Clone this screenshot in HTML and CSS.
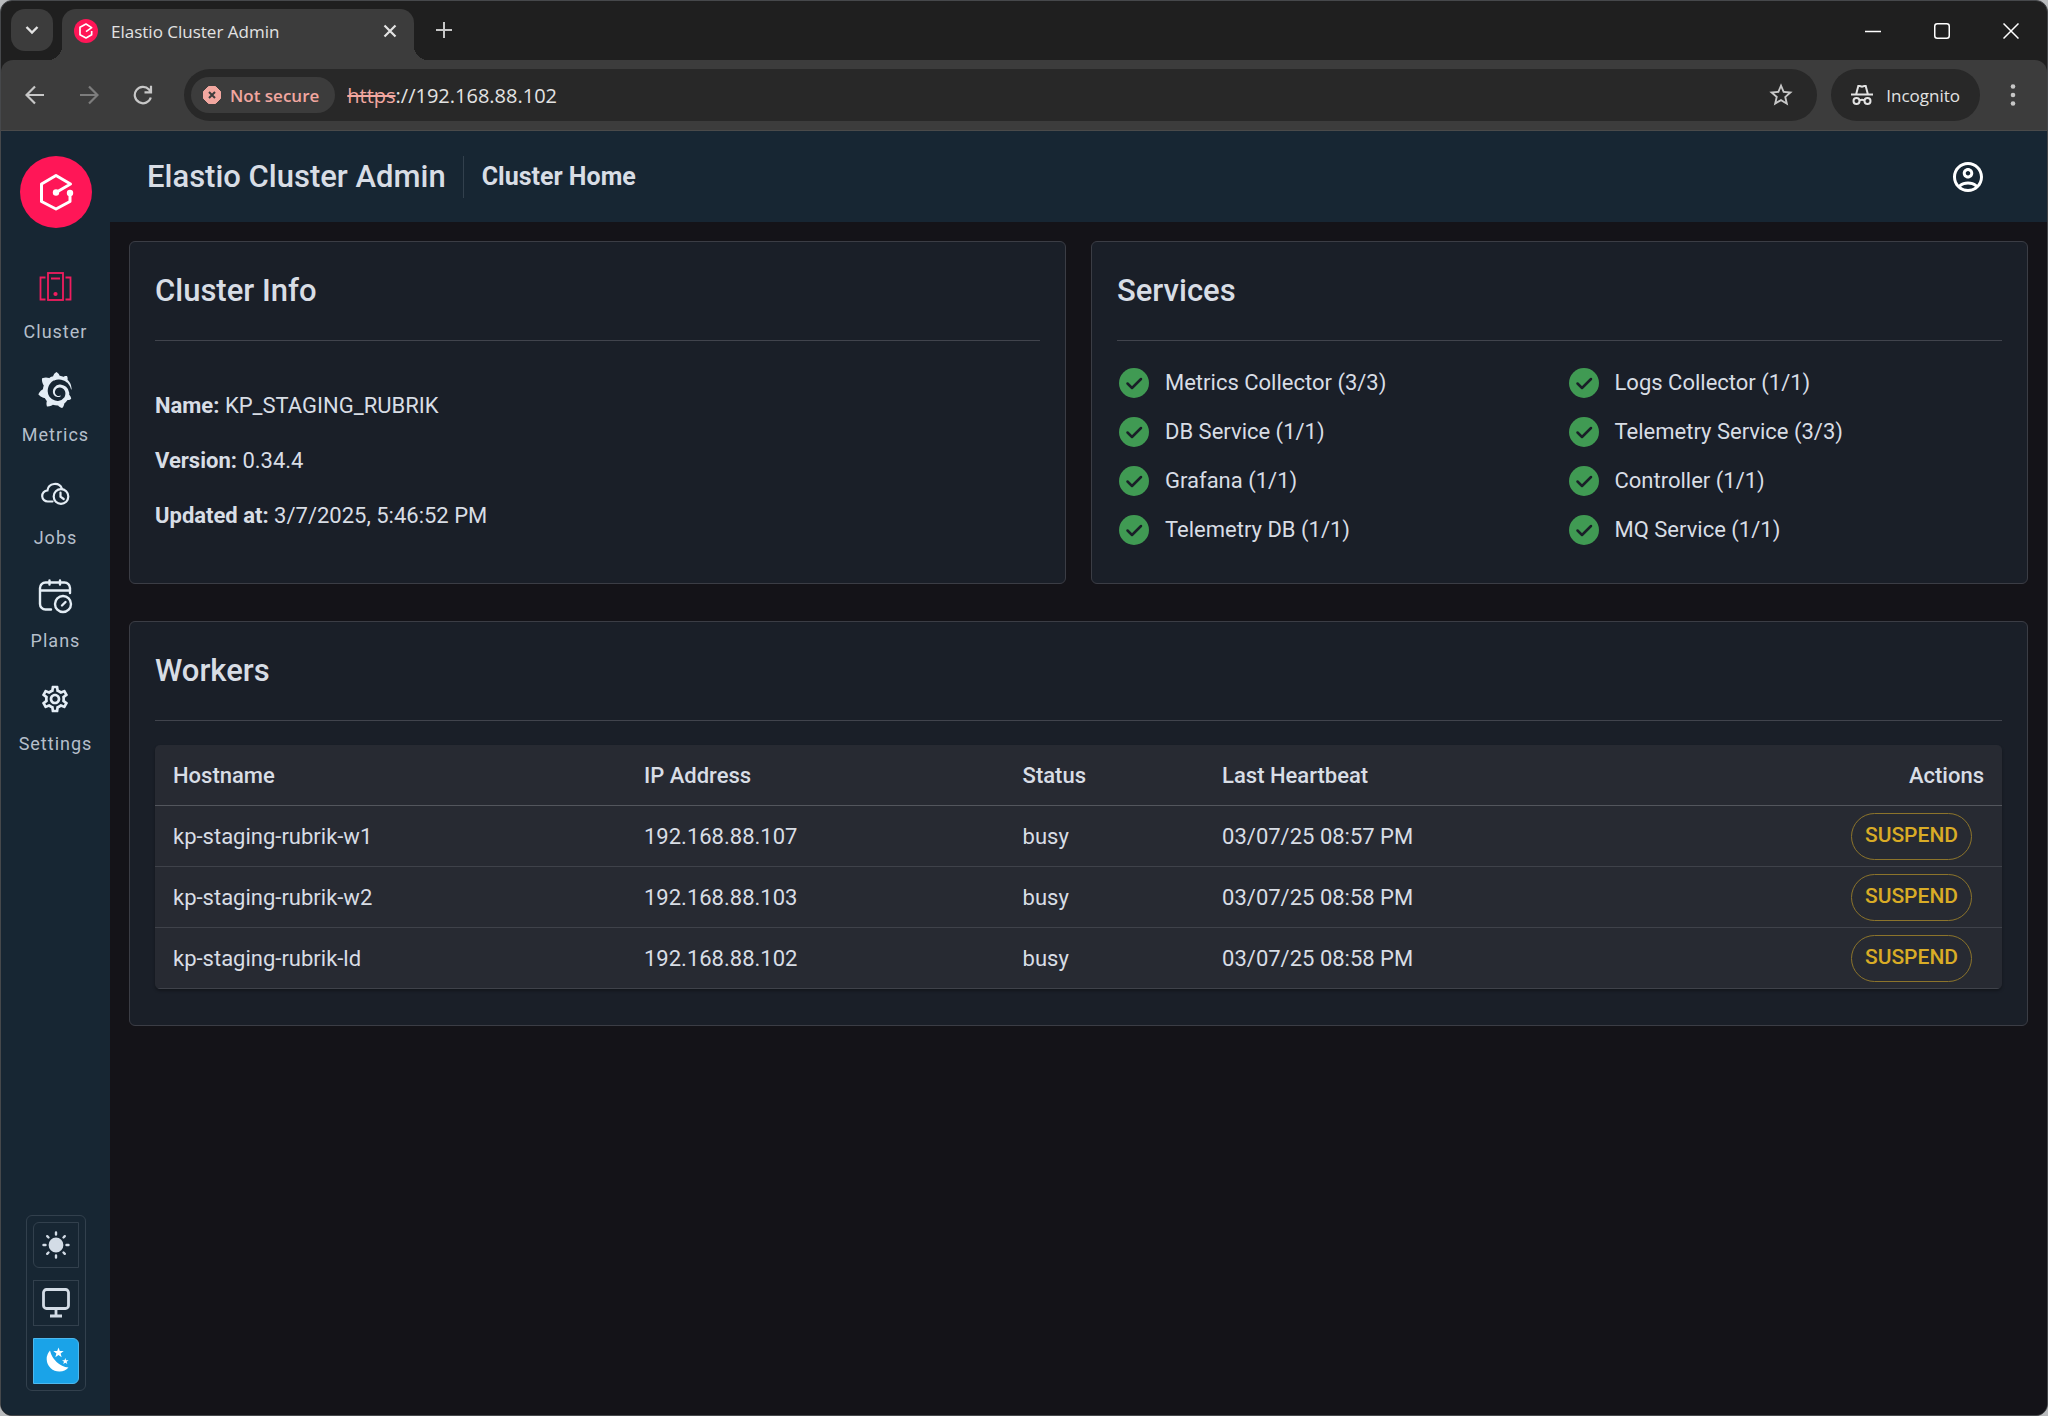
FILE: index.html
```
<!DOCTYPE html>
<html lang="en">
<head>
    <title>Elastio Cluster Admin</title>
    <meta charset="UTF-8">
    <meta name="viewport" content="width=device-width, initial-scale=1.0">
    <link rel="stylesheet" href="styles.css">
</head>
<body>
    <div class="window">
        <!-- Tab strip -->
        <div class="tab-strip">
            <button class="tab-search" aria-label="Search tabs">
                <svg width="18" height="18" viewBox="0 0 18 18" fill="none" stroke="currentColor" stroke-width="2.4"><path d="M3.5 6l5.5 5.5L14.5 6"/></svg>
            </button>
            <div class="tab">
                <svg class="favicon" width="24" height="24" viewBox="0 0 72 72">
                    <circle cx="36" cy="36" r="36" fill="#ff1657"/>
                    <path d="M36 38L53 26 36 15 18 25v22l18 10 17-10V36" fill="none" stroke="#fff" stroke-width="5" stroke-linejoin="round"/>
                </svg>
                <span class="tab-title">Elastio Cluster Admin</span>
                <button class="icon-btn tab-close" aria-label="Close tab">
                    <svg width="18" height="18" viewBox="0 0 18 18" stroke="currentColor" stroke-width="2.2"><path d="M3.5 3.5l11 11M14.5 3.5l-11 11"/></svg>
                </button>
            </div>
            <button class="icon-btn new-tab" aria-label="New tab">
                <svg width="18" height="18" viewBox="0 0 18 18" stroke="currentColor" stroke-width="2"><path d="M9 1v16M1 9h16"/></svg>
            </button>
            <div class="window-controls">
                <button class="icon-btn" aria-label="Minimize">
                    <svg width="16" height="16" viewBox="0 0 16 16" stroke="currentColor" stroke-width="1.5"><path d="M0 8.5h16"/></svg>
                </button>
                <button class="icon-btn" aria-label="Maximize">
                    <svg width="16" height="16" viewBox="0 0 16 16" fill="none" stroke="currentColor" stroke-width="1.5"><rect x=".75" y=".75" width="14.5" height="14.5" rx="2.5"/></svg>
                </button>
                <button class="icon-btn" aria-label="Close">
                    <svg width="16" height="16" viewBox="0 0 16 16" stroke="currentColor" stroke-width="1.5"><path d="M.5.5l15 15M15.5.5l-15 15"/></svg>
                </button>
            </div>
        </div>

        <!-- Toolbar -->
        <div class="toolbar">
            <div class="nav-buttons">
                <button class="icon-btn" aria-label="Back">
                    <svg width="20" height="20" viewBox="0 0 20 20" fill="none" stroke="currentColor" stroke-width="2.2"><path d="M19 10H2M10 1.5L1.500 10l8.500 8.500"/></svg>
                </button>
                <button class="icon-btn" aria-label="Forward" disabled>
                    <svg width="20" height="20" viewBox="0 0 20 20" fill="none" stroke="currentColor" stroke-width="2.2"><path d="M1 10h17M10 1.5l8.500 8.500-8.500 8.500"/></svg>
                </button>
                <button class="icon-btn" aria-label="Reload">
                    <svg width="20" height="20" viewBox="0 0 20 20" fill="none" stroke="currentColor" stroke-width="2.2"><path d="M17.8 12.500A8.200 8.200 0 1 1 16 4.500L18 7M18 .8v6.500h-6.500"/></svg>
                </button>
            </div>
            <div class="address-bar">
                <button class="security-chip">
                    <svg width="18" height="18" viewBox="0 0 18 18"><path d="M5.5.5h7l5 5v7l-5 5h-7l-5-5v-7z" fill="#f2a7a0" stroke="#f2a7a0" stroke-linejoin="round"/><path d="M6 6l6 6M12 6l-6 6" stroke="#3c3c3c" stroke-width="2"/></svg>
                    Not secure
                </button>
                <label class="scheme" for="url"><s>https</s></label>
                <input class="url" id="url" type="text" value="://192.168.88.102">
                <button class="icon-btn" aria-label="Bookmark this tab">
                    <svg width="28" height="28" viewBox="0 0 24 24" fill="currentColor"><path d="M22 9.240l-7.190-.62L12 2 9.190 8.630 2 9.240l5.460 4.730L5.820 21 12 17.270 18.180 21l-1.630-7.030L22 9.240zM12 15.400l-3.760 2.270 1-4.280-3.320-2.880 4.380-.38L12 6.100l1.710 4.040 4.380.38-3.320 2.880 1 4.280L12 15.400z"/></svg>
                </button>
            </div>
            <button class="incognito">
                <svg width="22" height="22" viewBox="0 0 22 22" fill="none" stroke="currentColor" stroke-width="2"><path d="M0 10.500h22M5.200 10L7.300 2h1.500l2.200.8 2.200-.8h1.500L16.800 10"/><circle cx="5.500" cy="17" r="3"/><circle cx="16.500" cy="17" r="3"/><path d="M8.500 16.500q2.500-1.600 5 0"/></svg>
                Incognito
            </button>
            <button class="icon-btn menu-btn" aria-label="Menu">
                <svg width="6" height="24" viewBox="0 0 6 24" fill="currentColor"><circle cx="3" cy="3.500" r="2.300"/><circle cx="3" cy="12" r="2.300"/><circle cx="3" cy="20.500" r="2.300"/></svg>
            </button>
        </div>

        <!-- App -->
        <div class="app">
            <aside class="sidebar">
                <a class="logo" href="#" aria-label="Elastio">
                    <svg width="72" height="72" viewBox="0 0 72 72">
                        <circle cx="36" cy="36" r="36" fill="#ff1657"/>
                        <path d="M36 36.500L50.500 28 36 19.500 21.500 28v17.500L36 53l14-7.500V37" fill="none" stroke="#fff" stroke-width="3" stroke-linejoin="round"/>
                        <circle cx="36" cy="36.500" r="3.200" fill="#fff"/>
                        <circle cx="50" cy="37" r="3.200" fill="#fff"/>
                    </svg>
                </a>
                <nav class="side-nav">
                    <a class="side-link active" href="#cluster">
                        <svg width="36" height="36" viewBox="0 0 36 36" fill="none" stroke="currentColor" stroke-width="1.8"><rect x="11" y="4" width="15" height="27"/><path d="M14 9.500h9M8.500 8.500h-5v22h5M28.500 8.500h5v22h-5"/><circle cx="18.500" cy="25" r="1.200" fill="currentColor"/></svg>
                        <span>Cluster</span>
                    </a>
                    <a class="side-link" href="#metrics">
                        <svg width="36" height="36" viewBox="0 0 24 24" fill="currentColor"><path d="M23.02 10.59a8.578 8.578 0 0 0-.862-3.034 8.911 8.911 0 0 0-1.789-2.445c.337-1.342-.413-2.505-.413-2.505-1.292-.08-2.113.4-2.416.62-.052-.02-.102-.044-.154-.064-.22-.089-.446-.172-.677-.247-.231-.073-.47-.14-.711-.197a9.867 9.867 0 0 0-.875-.161C14.557.753 12.94 0 12.94 0c-1.804 1.145-2.147 2.744-2.147 2.744l-.018.093c-.098.029-.2.057-.298.088-.138.042-.275.094-.413.143-.138.055-.275.107-.41.166a8.869 8.869 0 0 0-1.557.87l-.063-.029c-2.497-.955-4.716.195-4.716.195-.203 2.658.996 4.33 1.235 4.636a11.608 11.608 0 0 0-.607 2.635C1.636 12.677.953 15.014.953 15.014c1.926 2.214 4.171 2.351 4.171 2.351.003-.002.006-.002.006-.005.285.509.615.994.986 1.446.156.19.32.371.488.548-.704 2.009.099 3.68.099 3.68 2.144.08 3.553-.937 3.849-1.173a9.784 9.784 0 0 0 3.164.501h.08l.055-.003.107-.002.103-.005.003.002c1.01 1.44 2.788 1.646 2.788 1.646 1.264-1.332 1.337-2.653 1.337-2.94v-.058c0-.02-.003-.039-.003-.06.265-.187.52-.387.758-.6a7.875 7.875 0 0 0 1.415-1.7c1.43.083 2.437-.885 2.437-.885-.236-1.49-1.085-2.216-1.264-2.354l-.018-.013-.016-.013a.217.217 0 0 1-.031-.02c.008-.092.016-.18.02-.27.011-.162.016-.323.016-.48v-.253l-.005-.098-.008-.135a1.891 1.891 0 0 0-.01-.13c-.003-.042-.008-.083-.013-.125l-.016-.124-.018-.122a6.215 6.215 0 0 0-2.032-3.73 6.015 6.015 0 0 0-3.222-1.46 6.292 6.292 0 0 0-.85-.048l-.107.002h-.063l-.044.003-.104.008a4.777 4.777 0 0 0-3.335 1.695c-.332.4-.592.84-.768 1.297a4.594 4.594 0 0 0-.312 1.817l.003.091c.005.055.007.11.013.164a3.615 3.615 0 0 0 .698 1.82 3.53 3.53 0 0 0 1.827 1.282c.33.098.66.14.971.137.039 0 .078 0 .114-.002l.063-.003c.02 0 .041-.003.062-.003.034-.002.065-.007.099-.01.007 0 .018-.003.028-.003l.031-.005.06-.008a1.18 1.18 0 0 0 .112-.02c.036-.008.072-.013.109-.024a2.634 2.634 0 0 0 .914-.415c.028-.02.056-.041.085-.065a.248.248 0 0 0 .039-.35.244.244 0 0 0-.309-.06l-.078.042c-.09.044-.184.083-.283.116a2.476 2.476 0 0 1-.475.096c-.028.003-.054.006-.083.006l-.083.002c-.026 0-.054 0-.08-.002l-.102-.006h-.012l-.024.006c-.016-.003-.031-.003-.044-.006-.031-.002-.06-.007-.091-.01a2.59 2.59 0 0 1-.724-.213 2.557 2.557 0 0 1-.667-.438 2.52 2.52 0 0 1-.805-1.475 2.306 2.306 0 0 1-.029-.444l.006-.122v-.023l.002-.031c.003-.021.003-.04.005-.06a3.163 3.163 0 0 1 1.352-2.29 3.12 3.12 0 0 1 .937-.43 2.946 2.946 0 0 1 .776-.101h.06l.07.002.045.003h.026l.07.005a4.041 4.041 0 0 1 1.635.49 3.94 3.94 0 0 1 1.602 1.662 3.77 3.77 0 0 1 .397 1.414l.005.076.003.075c.002.026.002.05.002.075 0 .024.003.052 0 .07v.065l-.002.073-.008.174a6.195 6.195 0 0 1-.08.639 5.1 5.1 0 0 1-.267.927 5.31 5.31 0 0 1-.624 1.13 5.052 5.052 0 0 1-3.237 2.014 4.82 4.82 0 0 1-.649.066l-.039.003h-.287a6.607 6.607 0 0 1-1.716-.265 6.776 6.776 0 0 1-3.4-2.274 6.75 6.75 0 0 1-.746-1.15 6.616 6.616 0 0 1-.714-2.596l-.005-.083-.002-.02v-.056l-.003-.073v-.096l-.003-.104v-.07l.003-.163c.008-.22.026-.45.054-.678a8.707 8.707 0 0 1 .28-1.355c.128-.444.286-.872.473-1.277a7.04 7.04 0 0 1 1.456-2.1 5.925 5.925 0 0 1 .953-.763c.169-.111.343-.213.524-.306.089-.05.182-.091.273-.135.047-.02.093-.042.138-.062a7.177 7.177 0 0 1 .714-.267l.145-.045c.049-.015.098-.026.148-.041.098-.029.197-.052.296-.076.049-.013.1-.02.15-.033l.15-.032.151-.028.076-.013.075-.01.153-.024c.057-.01.114-.013.171-.023l.169-.021c.036-.003.073-.008.106-.01l.073-.008.036-.003.042-.002c.057-.003.114-.008.171-.01l.086-.006h.023l.037-.003.145-.007a7.999 7.999 0 0 1 1.708.125 7.917 7.917 0 0 1 2.048.68 8.253 8.253 0 0 1 1.672 1.09l.09.077.089.078c.06.052.114.107.171.159.057.052.112.106.166.16.052.055.107.107.159.164a8.671 8.671 0 0 1 1.41 1.978c.012.026.028.052.04.078l.04.078.075.156c.023.051.05.1.07.153l.065.15a8.848 8.848 0 0 1 .45 1.34.19.19 0 0 0 .201.142.186.186 0 0 0 .172-.184c.01-.246.002-.532-.024-.856z"/></svg>
                        <span>Metrics</span>
                    </a>
                    <a class="side-link" href="#jobs">
                        <svg width="36" height="36" viewBox="0 0 36 36" fill="none" stroke="currentColor" stroke-width="2.2" stroke-linecap="round"><path d="M15.500 26.500H11a5.500 5.500 0 0 1-.6-11A7.600 7.600 0 0 1 25 13.800"/><circle cx="24" cy="21.500" r="7.300"/><path d="M23.500 17.500v4.200l3.200 2.300"/></svg>
                        <span>Jobs</span>
                    </a>
                    <a class="side-link" href="#plans">
                        <svg width="36" height="36" viewBox="0 0 36 36" fill="none" stroke="currentColor" stroke-width="2.4" stroke-linecap="round"><path d="M14 31.500H8.500a5.500 5.500 0 0 1-5.500-5.500V10a5.500 5.500 0 0 1 5.500-5.500h19A5.500 5.500 0 0 1 33 10v5M3 12.500h30M12.500 2.500v4M23 2.500v4"/><circle cx="26" cy="26" r="8"/><path d="M25 27.500l3.500-3.500"/></svg>
                        <span>Plans</span>
                    </a>
                    <a class="side-link" href="#settings">
                        <svg width="36" height="36" viewBox="-1.5 -1.5 27 27" fill="currentColor"><path d="M19.430 12.980c.04-.32.07-.64.07-.98 0-.34-.03-.66-.07-.98l2.110-1.650c.19-.15.24-.42.12-.64l-2-3.460c-.09-.16-.26-.25-.44-.25-.06 0-.12.01-.17.03l-2.490 1c-.52-.4-1.080-.73-1.690-.98l-.38-2.650C14.460 2.180 14.250 2 14 2h-4c-.25 0-.46.18-.49.42l-.38 2.650c-.61.25-1.170.59-1.690.98l-2.490-1c-.06-.02-.12-.03-.18-.03-.17 0-.34.09-.43.25l-2 3.460c-.13.22-.07.49.12.64l2.110 1.650c-.04.32-.07.65-.07.98 0 .33.03.66.07.98l-2.110 1.650c-.19.15-.24.42-.12.64l2 3.460c.09.16.26.25.44.25.06 0 .12-.01.17-.03l2.490-1c.52.4 1.080.73 1.690.98l.38 2.650c.03.24.24.42.49.42h4c.25 0 .46-.18.49-.42l.38-2.650c.61-.25 1.170-.59 1.690-.98l2.490 1c.06.02.12.03.18.03.17 0 .34-.09.43-.25l2-3.460c.12-.22.07-.49-.12-.64l-2.110-1.650zm-1.980-1.710c.04.31.05.52.05.73 0 .21-.02.43-.05.73l-.14 1.130.89.7 1.080.84-.7 1.210-1.270-.51-1.040-.42-.9.68c-.43.32-.84.56-1.250.73l-1.060.43-.16 1.130-.2 1.350h-1.400l-.19-1.350-.16-1.130-1.060-.43c-.43-.18-.83-.41-1.230-.71l-.91-.7-1.060.43-1.270.51-.7-1.210 1.080-.84.89-.7-.14-1.130c-.03-.31-.05-.54-.05-.74s.02-.43.05-.73l.14-1.130-.89-.7-1.080-.84.7-1.210 1.270.51 1.040.42.9-.68c.43-.32.84-.56 1.250-.73l1.060-.43.16-1.130.2-1.350h1.390l.19 1.350.16 1.130 1.060.43c.43.18.83.41 1.230.71l.91.7 1.060-.43 1.270-.51.7 1.210-1.070.85-.89.7.14 1.130zM12 8c-2.210 0-4 1.790-4 4s1.790 4 4 4 4-1.790 4-4-1.790-4-4-4zm0 6c-1.100 0-2-.9-2-2s.9-2 2-2 2 .9 2 2-.9 2-2 2z"/></svg>
                        <span>Settings</span>
                    </a>
                </nav>
                <div class="theme-switch">
                    <button class="theme-btn" aria-label="Light theme">
                        <svg width="28" height="28" viewBox="0 0 28 28" fill="currentColor" stroke="currentColor" stroke-width="2.4" stroke-linecap="round"><circle cx="14" cy="14" r="6.200"/><path d="M14 1.500v2M14 24.500v2M1.500 14h2M24.500 14h2M5.200 5.200l1.300 1.300M21.500 21.500l1.300 1.300M5.200 22.800l1.300-1.300M21.500 6.500l1.300-1.300"/></svg>
                    </button>
                    <button class="theme-btn" aria-label="System theme">
                        <svg width="28" height="30" viewBox="0 0 28 30" fill="none" stroke="currentColor" stroke-width="2.8"><rect x="1.500" y="1.500" width="25" height="19" rx="3"/><path d="M14 20.500v7M8 28h12"/></svg>
                    </button>
                    <button class="theme-btn selected" aria-label="Dark theme">
                        <svg width="28" height="28" viewBox="0 0 28 28" fill="currentColor"><path d="M8 3.500A12.500 12.500 0 1 0 26.500 20.500 22 22 0 0 1 8 3.500z"/><path d="M16.500.5l1.300 3.500h3.900l-3.100 2.400 1.100 3.800-3.200-2.200-3.200 2.200 1.100-3.800L11.300 4h3.900zM23.300 11l.8 2.200h2.500l-2 1.500.7 2.400-2-1.400-2.100 1.400.8-2.400-2-1.500h2.500z"/></svg>
                    </button>
                </div>
            </aside>

            <div class="page">
                <header class="page-header">
                    <div class="product">Elastio Cluster Admin</div>
                    <h1>Cluster Home</h1>
                    <button class="icon-btn account" aria-label="Account">
                        <svg width="36" height="36" viewBox="0 0 24 24" fill="currentColor"><path d="M12 2C6.480 2 2 6.480 2 12s4.480 10 10 10 10-4.480 10-10S17.520 2 12 2M7.350 18.500C8.660 17.560 10.260 17 12 17s3.340.56 4.650 1.500c-1.310.94-2.910 1.500-4.650 1.500s-3.340-.56-4.650-1.500m10.790-1.380C16.450 15.800 14.320 15 12 15s-4.450.8-6.140 2.120C4.700 15.730 4 13.950 4 12c0-4.420 3.580-8 8-8s8 3.580 8 8c0 1.950-.7 3.730-1.860 5.120M12 6c-1.930 0-3.500 1.570-3.500 3.500S10.070 13 12 13s3.500-1.570 3.500-3.500S13.930 6 12 6m0 5c-.83 0-1.500-.67-1.500-1.500S11.170 8 12 8s1.500.67 1.500 1.500S12.830 11 12 11"/></svg>
                    </button>
                </header>

                <main class="content">
                    <section class="card">
                        <h2>Cluster Info</h2>
                        <div class="info">
                            <p><strong>Name:</strong> KP_STAGING_RUBRIK</p>
                            <p><strong>Version:</strong> 0.34.4</p>
                            <p><strong>Updated at:</strong> 3/7/2025, 5:46:52 PM</p>
                        </div>
                    </section>

                    <section class="card">
                        <h2>Services</h2>
                        <ul class="services">
                            <li><svg class="check" viewBox="0 0 30 30"><circle cx="15" cy="15" r="15"/><path d="M8.500 15.500l4.500 4.500 9-9"/></svg>Metrics Collector (3/3)</li>
                            <li><svg class="check" viewBox="0 0 30 30"><circle cx="15" cy="15" r="15"/><path d="M8.500 15.500l4.500 4.500 9-9"/></svg>Logs Collector (1/1)</li>
                            <li><svg class="check" viewBox="0 0 30 30"><circle cx="15" cy="15" r="15"/><path d="M8.500 15.500l4.500 4.500 9-9"/></svg>DB Service (1/1)</li>
                            <li><svg class="check" viewBox="0 0 30 30"><circle cx="15" cy="15" r="15"/><path d="M8.500 15.500l4.500 4.500 9-9"/></svg>Telemetry Service (3/3)</li>
                            <li><svg class="check" viewBox="0 0 30 30"><circle cx="15" cy="15" r="15"/><path d="M8.500 15.500l4.500 4.500 9-9"/></svg>Grafana (1/1)</li>
                            <li><svg class="check" viewBox="0 0 30 30"><circle cx="15" cy="15" r="15"/><path d="M8.500 15.500l4.500 4.500 9-9"/></svg>Controller (1/1)</li>
                            <li><svg class="check" viewBox="0 0 30 30"><circle cx="15" cy="15" r="15"/><path d="M8.500 15.500l4.500 4.500 9-9"/></svg>Telemetry DB (1/1)</li>
                            <li><svg class="check" viewBox="0 0 30 30"><circle cx="15" cy="15" r="15"/><path d="M8.500 15.500l4.500 4.500 9-9"/></svg>MQ Service (1/1)</li>
                        </ul>
                    </section>

                    <section class="card card-wide">
                        <h2>Workers</h2>
                        <table class="workers">
                            <thead>
                                <tr>
                                    <th class="col-host">Hostname</th>
                                    <th class="col-ip">IP Address</th>
                                    <th class="col-status">Status</th>
                                    <th>Last Heartbeat</th>
                                    <th class="col-actions">Actions</th>
                                </tr>
                            </thead>
                            <tbody>
                                <tr>
                                    <td>kp-staging-rubrik-w1</td>
                                    <td>192.168.88.107</td>
                                    <td>busy</td>
                                    <td>03/07/25 08:57 PM</td>
                                    <td class="actions"><button class="suspend">SUSPEND</button></td>
                                </tr>
                                <tr>
                                    <td>kp-staging-rubrik-w2</td>
                                    <td>192.168.88.103</td>
                                    <td>busy</td>
                                    <td>03/07/25 08:58 PM</td>
                                    <td class="actions"><button class="suspend">SUSPEND</button></td>
                                </tr>
                                <tr>
                                    <td>kp-staging-rubrik-ld</td>
                                    <td>192.168.88.102</td>
                                    <td>busy</td>
                                    <td>03/07/25 08:58 PM</td>
                                    <td class="actions"><button class="suspend">SUSPEND</button></td>
                                </tr>
                            </tbody>
                        </table>
                    </section>
                </main>
            </div>
        </div>
    </div>
</body>
</html>
```
FILE: styles.css
```
* {
    box-sizing: border-box;
}
body {
    margin: 0;
    background: #b9bbbd;
    color: #d8dde5;
    font-family: Roboto, sans-serif;
    font-size: 22px;
}
button {
    font: inherit;
    color: inherit;
    background: none;
    border: 0;
    padding: 0;
    cursor: pointer;
}
svg {
    display: block;
    flex: none;
}
.window {
    display: flex;
    flex-direction: column;
    min-height: 100vh;
    border: 1px solid #46484b;
    border-radius: 12px;
    background: #1f1f1f;
    overflow: hidden;
}
.icon-btn {
    display: flex;
    align-items: center;
    justify-content: center;
}

/* Tab strip */
.tab-strip {
    display: flex;
    height: 59px;
    padding: 8px 10px 0;
    color: #e3e3e3;
    font-family: "Open Sans", sans-serif;
    font-size: 17px;
}
.tab-search {
    display: flex;
    align-items: center;
    justify-content: center;
    width: 42px;
    height: 42px;
    border-radius: 14px;
    background: #3c3c3c;
}
.tab {
    position: relative;
    display: flex;
    align-items: center;
    width: 352px;
    margin-left: 9px;
    padding: 0 15px 7px 12px;
    border-radius: 14px 14px 0 0;
    background: #3c3c3c;
}
/* Curved feet on both sides of the active tab */
.tab::before,
.tab::after {
    content: "";
    position: absolute;
    bottom: 0;
    width: 14px;
    height: 14px;
}
.tab::before {
    left: -14px;
    background: radial-gradient(circle at 0 0, transparent 14px, #3c3c3c 14px);
}
.tab::after {
    right: -14px;
    background: radial-gradient(circle at 100% 0, transparent 14px, #3c3c3c 14px);
}
.tab-title {
    flex: 1;
    margin-left: 13px;
}
.new-tab {
    width: 42px;
    height: 42px;
    margin-left: 9px;
    color: #c7c7c7;
}
.window-controls {
    display: flex;
    align-items: center;
    gap: 53px;
    height: 44px;
    margin-left: auto;
    padding-right: 18px;
    color: #fff;
}

/* Toolbar */
.toolbar {
    display: flex;
    align-items: center;
    height: 71px;
    padding: 0 31px 0 24px;
    border-bottom: 1px solid #4a4a4a;
    border-radius: 12px 12px 0 0;
    background: #3c3c3c;
    color: #c7c7c7;
    font-family: "Open Sans", sans-serif;
    font-size: 17px;
}
.nav-buttons {
    display: flex;
    gap: 34px;
}
.nav-buttons button:disabled {
    color: #7d7d7d;
}
.address-bar {
    flex: 1;
    display: flex;
    align-items: center;
    height: 52px;
    margin-left: 31px;
    padding: 0 22px 0 7px;
    border-radius: 26px;
    background: #282828;
    font-size: 20px;
}
.security-chip {
    display: flex;
    align-items: center;
    gap: 9px;
    height: 36px;
    padding: 0 16px 0 12px;
    border-radius: 18px;
    background: #3c3c3c;
    color: #f2a7a0;
    font-size: 17px;
    font-weight: 600;
}
.scheme {
    margin-left: 12px;
    color: #f2a7a0;
}
.url {
    flex: 1;
    min-width: 0;
    border: 0;
    padding: 0;
    background: none;
    color: #e3e3e3;
    font: inherit;
    outline: none;
}
.incognito {
    display: flex;
    align-items: center;
    gap: 13px;
    height: 52px;
    margin-left: 14px;
    padding: 0 20px;
    border-radius: 26px;
    background: #282828;
    color: #e3e3e3;
}
.menu-btn {
    margin-left: 30px;
}

/* Layout */
.app {
    flex: 1;
    display: flex;
    background: #141318;
}
.sidebar {
    display: flex;
    flex-direction: column;
    align-items: center;
    width: 109px;
    padding: 25px 0 24px;
    background: #172633;
}
.page {
    flex: 1;
    min-width: 0;
}

/* Sidebar */
.side-nav {
    display: flex;
    flex-direction: column;
    gap: 28px;
    margin-top: 41px;
}
.side-link {
    display: flex;
    flex-direction: column;
    align-items: center;
    gap: 15px;
    color: #e4edf5;
    font-size: 18px;
    line-height: 24px;
    letter-spacing: 1px;
    text-decoration: none;
}
.side-link span {
    color: #b5bfcb;
}
.side-link.active {
    color: #f01d5f;
}
.theme-switch {
    display: flex;
    flex-direction: column;
    gap: 12px;
    margin-top: auto;
    padding: 6px;
    border: 1px solid #32404d;
    border-radius: 6px;
}
.theme-btn {
    display: flex;
    align-items: center;
    justify-content: center;
    width: 46px;
    height: 46px;
    border: 1px solid #32404d;
    color: #d3dce6;
}
.theme-btn:first-child {
    border-radius: 6px 0 0 6px;
}
.theme-btn:last-child {
    border-radius: 0 6px 6px 0;
}
.theme-btn.selected {
    border-color: #4db8ee;
    background: #1aa3e8;
    color: #fff;
}

/* Header */
.page-header {
    display: flex;
    align-items: center;
    height: 91px;
    padding: 0 61px 0 37px;
    background: #172633;
}
.product {
    padding-right: 17px;
    border-right: 1px solid #32404d;
    font-size: 31px;
    font-weight: 500;
    line-height: 42px;
}
h1 {
    margin: 0 0 0 18px;
    font-size: 25px;
    font-weight: 700;
}
.account {
    margin-left: auto;
    color: #fff;
}

/* Cards */
.content {
    display: grid;
    grid-template-columns: 1fr 1fr;
    gap: 37px 25px;
    padding: 19px;
}
.card {
    padding: 0 25px;
    border: 1px solid #3b3d45;
    border-radius: 6px;
    background: #1a1f28;
}
.card-wide {
    grid-column: 1 / -1;
    padding-bottom: 36px;
}
h2 {
    margin: 0;
    padding: 29px 0;
    border-bottom: 1px solid #41444d;
    font-size: 31px;
    font-weight: 500;
    line-height: 40px;
}
.info {
    padding-top: 52px;
    line-height: 25px;
}
.info p {
    margin: 0 0 30px;
}
.services {
    display: grid;
    grid-template-columns: 1fr 1fr;
    column-gap: 16px;
    margin: 0;
    padding: 17px 0 29px 2px;
    list-style: none;
}
.services li {
    display: flex;
    align-items: center;
    gap: 16px;
    height: 49px;
}
.check {
    width: 30px;
    height: 30px;
}
.check circle {
    fill: #409a53;
}
.check path {
    fill: none;
    stroke: #1a1f28;
    stroke-width: 2.5;
    stroke-linecap: round;
    stroke-linejoin: round;
}

/* Workers table */
.workers {
    width: 100%;
    margin-top: 24px;
    border-spacing: 0;
    border-radius: 5px;
    background: #272a32;
    box-shadow: 0 2px 3px rgba(0, 0, 0, 0.3);
    table-layout: fixed;
    overflow: hidden;
}
.workers th,
.workers td {
    height: 61px;
    padding: 0 18px;
    border-bottom: 1px solid #3f424a;
    text-align: left;
}
.workers th {
    border-bottom-color: #53565d;
    font-weight: 500;
}
.col-host {
    width: 25.5%;
}
.col-ip {
    width: 20.5%;
}
.col-status {
    width: 10.8%;
}
.workers .col-actions {
    text-align: right;
}
.workers .actions {
    padding-right: 30px;
    text-align: right;
}
.suspend {
    height: 47px;
    padding: 0 13px 2px;
    border: 1px solid #8c742b;
    border-radius: 24px;
    color: #d9ac26;
    font-size: 21px;
    font-weight: 500;
}
```
